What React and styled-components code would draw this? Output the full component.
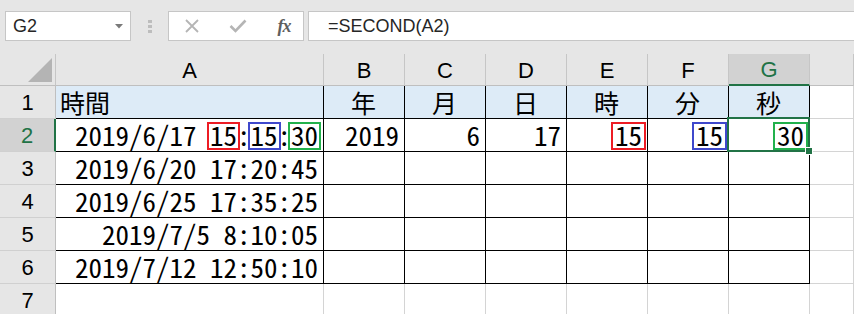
import React from 'react'
import styled, { createGlobalStyle } from 'styled-components'

const GlobalStyle = createGlobalStyle`
  html, body {
    margin: 0;
    padding: 0;
    background: #ffffff;
  }
  * {
    box-sizing: border-box;
  }
`;

const CELL_FONT = '"Noto Sans Mono CJK JP", "Noto Sans CJK JP", sans-serif';
const UI_FONT = '"Liberation Sans", Arial, sans-serif';
const GREEN = '#217346';

const Page = styled.div`
  width: 854px;
  height: 314px;
  overflow: hidden;
  background: #ffffff;
`;

const Toolbar = styled.div`
  display: flex;
  align-items: flex-start;
  height: 54px;
  padding: 11px 0 0 5px;
  background: #e6e6e6;
  font-family: ${UI_FONT};
`;

const NameBox = styled.div`
  display: flex;
  align-items: center;
  justify-content: space-between;
  width: 126px;
  height: 30px;
  padding: 0 7px 0 7px;
  background: #ffffff;
  border: 1px solid #c6c6c6;
  font-size: 18px;
  color: #262626;
`;

const Dots = styled.div`
  display: flex;
  flex-direction: column;
  gap: 2px;
  margin: 9px 16px 0 17px;

  span {
    width: 4px;
    height: 3px;
    background: #bdbdbd;
  }
`;

const FxBox = styled.div`
  display: grid;
  grid-template-columns: repeat(3, 46px);
  justify-items: center;
  align-items: center;
  width: 136px;
  height: 30px;
  background: #ffffff;
  border: 1px solid #c6c6c6;
`;

const Fx = styled.span`
  font-family: "Liberation Serif", "Times New Roman", serif;
  font-style: italic;
  font-weight: 700;
  font-size: 18px;
  color: #5f5f5f;
  letter-spacing: -1px;
`;

const Formula = styled.div`
  flex: 1;
  height: 30px;
  margin-left: 4px;
  padding-left: 19px;
  display: flex;
  align-items: center;
  background: #ffffff;
  border: 1px solid #c6c6c6;
  border-right: none;
  font-size: 18px;
  color: #262626;
`;

const Sheet = styled.div`
  display: grid;
  grid-template-columns: 56px 268px repeat(6, 81px) 1fr;
  grid-template-rows: 32px repeat(7, 33px);
`;

const Corner = styled.div`
  display: flex;
  align-items: flex-end;
  justify-content: flex-end;
  padding: 0 3px 3px 0;
  background: #e6e6e6;
  border-right: 1px solid #c6c6c6;
  border-bottom: 1px solid #bfbfbf;
`;

const ColHead = styled.div`
  display: flex;
  align-items: center;
  justify-content: center;
  padding-top: 2px;
  background: ${p => (p.$selected ? '#d2d2d2' : '#e6e6e6')};
  border-right: 1px solid #c6c6c6;
  border-bottom: ${p => (p.$selected ? `2px solid ${GREEN}` : '1px solid #bfbfbf')};
  font-family: ${UI_FONT};
  font-size: 22px;
  color: ${p => (p.$selected ? GREEN : '#000000')};
`;

const RowHead = styled.div`
  display: flex;
  align-items: center;
  justify-content: center;
  padding-top: 1px;
  background: ${p => (p.$selected ? '#d2d2d2' : '#e6e6e6')};
  border-right: ${p => (p.$selected ? `2px solid ${GREEN}` : '1px solid #bfbfbf')};
  border-bottom: 1px solid #d0d0d0;
  font-family: ${UI_FONT};
  font-size: 22px;
  color: ${p => (p.$selected ? GREEN : '#000000')};
`;

const Cell = styled.div`
  position: relative;
  padding: 0 5px 0 4px;
  line-height: 32px;
  white-space: nowrap;
  overflow: visible;
  text-align: ${p => p.$align || 'right'};
  background: ${p => (p.$head ? '#ddebf7' : '#ffffff')};
  border-right: 1px solid ${p => (p.$table ? '#000000' : '#d4d4d4')};
  border-bottom: 1px solid ${p => (p.$table ? '#000000' : '#d4d4d4')};
  font-family: ${CELL_FONT};
  font-size: ${p => (p.$head ? '25px' : '27px')};
  color: #000000;

  ${p =>
    p.$selected &&
    `
    &::after {
      content: '';
      position: absolute;
      top: -2px;
      left: -2px;
      right: -1px;
      bottom: -1px;
      border: 2px solid ${GREEN};
      pointer-events: none;
    }
    &::before {
      content: '';
      position: absolute;
      right: -4px;
      bottom: -4px;
      width: 6px;
      height: 6px;
      background: ${GREEN};
      border: 1px solid #ffffff;
      z-index: 2;
    }
  `}
`;

const Mark = styled.span`
  position: relative;
  display: inline-block;
  line-height: 24px;

  &::after {
    content: '';
    position: absolute;
    top: -1px;
    bottom: -3px;
    left: -${p => p.$gap}px;
    right: -${p => p.$gap}px;
    border: 2px solid ${p => p.$color};
  }
`;

const RED = '#ed1c24';
const BLUE = '#3f48cc';
const LIME = '#22b14c';

const columns = ['A', 'B', 'C', 'D', 'E', 'F', 'G'];
const heads = ['時間', '年', '月', '日', '時', '分', '秒'];
const dates = ['2019/6/20 17:20:45', '2019/6/25 17:35:25', '2019/7/5 8:10:05', '2019/7/12 12:50:10'];

function CrossIcon() {
  return (
    <svg width="16" height="16" viewBox="0 0 16 16">
      <path d="M2 2 L14 14 M14 2 L2 14" stroke="#b5b5b5" strokeWidth="1.8" fill="none" />
    </svg>
  );
}

function CheckIcon() {
  return (
    <svg width="18" height="14" viewBox="0 0 18 14">
      <path d="M1.5 7 L6.5 12 L16.5 1.5" stroke="#b5b5b5" strokeWidth="2.6" fill="none" />
    </svg>
  );
}

export default function App() {
  return (
    <Page>
      <GlobalStyle />
      <Toolbar>
        <NameBox>
          <span>G2</span>
          <svg width="8" height="5" viewBox="0 0 8 5">
            <path d="M0 0 L8 0 L4 4.5 Z" fill="#7a7a7a" />
          </svg>
        </NameBox>
        <Dots>
          <span />
          <span />
          <span />
        </Dots>
        <FxBox>
          <CrossIcon />
          <CheckIcon />
          <Fx>fx</Fx>
        </FxBox>
        <Formula>=SECOND(A2)</Formula>
      </Toolbar>

      <Sheet>
        <Corner>
          <svg width="24" height="24" viewBox="0 0 24 24">
            <polygon points="24,0 24,24 0,24" fill="#b4b4b4" />
          </svg>
        </Corner>
        {columns.map(c => (
          <ColHead key={c} $selected={c === 'G'}>{c}</ColHead>
        ))}
        <ColHead />

        <RowHead>1</RowHead>
        {heads.map((h, i) => (
          <Cell key={h} $head $table $align={i === 0 ? 'left' : 'center'}>{h}</Cell>
        ))}
        <Cell />

        <RowHead $selected>2</RowHead>
        <Cell $table>
          2019/6/17 <Mark $color={RED} $gap={3}>15</Mark>:<Mark $color={BLUE} $gap={3}>15</Mark>:<Mark $color={LIME} $gap={3}>30</Mark>
        </Cell>
        <Cell $table>2019</Cell>
        <Cell $table>6</Cell>
        <Cell $table>17</Cell>
        <Cell $table><Mark $color={RED} $gap={4}>15</Mark></Cell>
        <Cell $table><Mark $color={BLUE} $gap={4}>15</Mark></Cell>
        <Cell $table $selected><Mark $color={LIME} $gap={4}>30</Mark></Cell>
        <Cell />

        {dates.map((d, r) => (
          <React.Fragment key={d}>
            <RowHead>{r + 3}</RowHead>
            <Cell $table>{d}</Cell>
            {columns.slice(1).map(c => (
              <Cell key={c} $table />
            ))}
            <Cell />
          </React.Fragment>
        ))}

        <RowHead>7</RowHead>
        {columns.map(c => (
          <Cell key={c} />
        ))}
        <Cell />
      </Sheet>
    </Page>
  );
}
